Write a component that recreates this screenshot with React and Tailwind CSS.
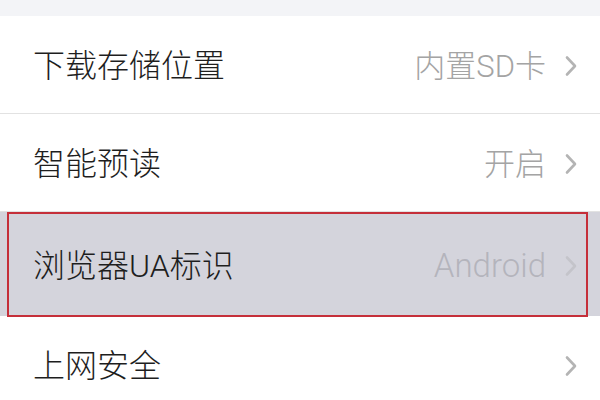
const rows = [
  { label: '下载存储位置', value: '内置SD卡' },
  { label: '智能预读', value: '开启' },
  { label: '浏览器UA标识', value: 'Android', active: true },
  { label: '上网安全', value: '' },
]

function Chevron({ className }) {
  return (
    <svg width="14" height="24" viewBox="0 0 14 24" className={className} fill="none">
      <path d="M3 3.5 L11 12 L3 20.5" stroke="currentColor" strokeWidth="2.6" strokeLinecap="round" strokeLinejoin="round" />
    </svg>
  )
}

export default function App() {
  return (
    <div
      className="h-[400px] w-[600px] overflow-hidden bg-white"
      style={{ fontFamily: 'Roboto, "Noto Sans CJK SC", sans-serif' }}
    >
      <div className="h-[16px] bg-[#f3f4f7]" />
      {rows.map((row) => (
        <div
          key={row.label}
          className={
            row.active
              ? 'relative flex h-[104px] items-center justify-between bg-[#d4d4dc] pl-[33px] pr-[22px]'
              : 'flex h-[98px] items-center justify-between border-b border-[#e2e2e2] pl-[33px] pr-[22px]'
          }
        >
          <span className="pt-[3px] text-[32px] font-light leading-none text-[#1e1e1e]">{row.label}</span>
          <div className="flex items-center gap-[18px] pt-[3px]">
            <span
              className={
                row.active
                  ? 'text-[33px] font-light leading-none text-[#b4b4bc]'
                  : 'text-[31px] font-light leading-none text-[#a4a4a4]'
              }
            >
              {row.value}
            </span>
            <Chevron className={row.active ? 'text-[#c4c4ca]' : 'text-[#b4b4b4]'} />
          </div>
          {row.active && (
            <span className="pointer-events-none absolute left-[7px] top-0 h-[105px] w-[581px] border-2 border-[#c52f3a]" />
          )}
        </div>
      ))}
    </div>
  )
}
